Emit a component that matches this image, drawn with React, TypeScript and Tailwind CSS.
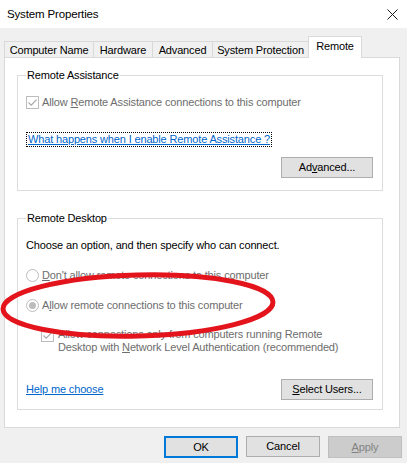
const font = "font-['Segoe_UI','Liberation_Sans',Arial,sans-serif]";

function CheckBox() {
  return (
    <span className="flex h-[13px] w-[13px] shrink-0 items-center justify-center border border-[#bcbcbc] bg-white">
      <svg width="11" height="11" viewBox="0 0 11 11">
        <path d="M1.5 5.5 L4.2 8.2 L9.6 2.6" stroke="#a6a6a6" strokeWidth="1.1" fill="none" />
      </svg>
    </span>
  );
}

function Radio({ checked }: { checked?: boolean }) {
  return (
    <span className="flex h-[13px] w-[13px] shrink-0 items-center justify-center rounded-full border border-[#bcbcbc] bg-white">
      {checked && <span className="h-[7px] w-[7px] rounded-full bg-[#bcbcbc]" />}
    </span>
  );
}

function Button({ children, w = "w-[92px]" }: { children: React.ReactNode; w?: string }) {
  return (
    <div className={`flex h-[21px] ${w} items-center justify-center border border-[#adadad] bg-[#e1e1e1] text-black`}>
      {children}
    </div>
  );
}

function Group({ title, children }: { title: string; children: React.ReactNode }) {
  return (
    <div className="ml-[12px] mr-[16px] border border-[#dcdcdc] pl-[8px] pr-[9px]">
      <div className="-mt-[8px] w-fit bg-white px-[1px] text-black">{title}</div>
      {children}
    </div>
  );
}

const tabs = [
  { label: "Computer Name", w: "w-[89px]" },
  { label: "Hardware", w: "w-[59px]" },
  { label: "Advanced", w: "w-[60px]" },
  { label: "System Protection", w: "w-[96px]" },
];

export default function App() {
  return (
    <div
      className={`relative flex h-[463px] w-[407px] flex-col bg-[#f0f0f0] text-[11px] leading-[15px] tracking-[-0.15px] text-black ${font}`}
    >
      {/* title bar */}
      <div className="flex h-[28px] items-center justify-between bg-white pl-[7px] pr-[9px]">
        <span className="text-[11.5px]">System Properties</span>
        <svg width="11" height="11" viewBox="0 0 11 11">
          <path d="M0.5 0.5 L10.5 10.5 M10.5 0.5 L0.5 10.5" stroke="#1a1a1a" strokeWidth="1" />
        </svg>
      </div>

      {/* tabs */}
      <div className="ml-[4px] mt-[8px] flex h-[21px] items-end">
        {tabs.map((t) => (
          <div
            key={t.label}
            className={`flex h-[16px] ${t.w} items-center justify-center border-l border-t border-[#d9d9d9] pt-[1px]`}
          >
            {t.label}
          </div>
        ))}
        <div className="relative z-10 -mb-px flex h-[22px] w-[54px] items-start justify-center border-x border-t border-[#d9d9d9] bg-white pt-[2px]">
          Remote
        </div>
      </div>

      {/* panel */}
      <div className="ml-[4px] flex w-[396px] flex-col border border-[#d9d9d9] bg-white pb-[17px] pt-[17px]">
        <Group title="Remote Assistance">
          <div className="mt-[12px] flex h-[15px] items-center gap-[3px] text-[#6d6d6d]">
            <CheckBox />
            <span>
              Allow <u>R</u>emote Assistance connections to this computer
            </span>
          </div>
          <div className="mt-[22px] w-fit border border-dotted border-black px-px leading-[13px] text-[#0066cc] underline">
            What happens when I enable Remote Assistance ?
          </div>
          <div className="mb-[12px] mt-[10px] flex justify-end">
            <Button>
              <span>
                Ad<u>v</u>anced...
              </span>
            </Button>
          </div>
        </Group>

        <div className="mt-[27px]">
          <Group title="Remote Desktop">
            <div className="mt-[12px]">Choose an option, and then specify who can connect.</div>
            <div className="mt-[15px] flex h-[15px] items-center gap-[3px] text-[#6d6d6d]">
              <Radio />
              <span>
                <u>D</u>on't allow remote connections to this computer
              </span>
            </div>
            <div className="mt-[15px] flex h-[15px] items-center gap-[3px] text-[#6d6d6d]">
              <Radio checked />
              <span>
                A<u>l</u>low remote connections to this computer
              </span>
            </div>
            <div className="ml-[15px] mt-[15px] flex gap-[4px] leading-[13px] text-[#6d6d6d]">
              <div className="pt-[1px]">
                <CheckBox />
              </div>
              <span>
                Allow connections only from computers running Remote
                <br />
                Desktop with <u>N</u>etwork Level Authentication (recommended)
              </span>
            </div>
            <div className="mb-[9px] mt-[25px] flex items-center justify-between">
              <span className="text-[#0066cc] underline">Help me choose</span>
              <Button>
                <span>
                  <u>S</u>elect Users...
                </span>
              </Button>
            </div>
          </Group>
        </div>
      </div>

      {/* dialog buttons */}
      <div className="mt-[8px] flex justify-end gap-[8px] pr-[5px]">
        <div className="flex h-[22px] w-[74px] items-center justify-center border-2 border-[#0078d7] bg-[#e1e1e1]">OK</div>
        <Button w="w-[74px]">Cancel</Button>
        <div className="flex h-[22px] w-[74px] items-center justify-center border border-[#bfbfbf] bg-[#cccccc] text-[#838383]">
          <span>
            <u>A</u>pply
          </span>
        </div>
      </div>

      {/* red annotation ellipse */}
      <svg className="pointer-events-none absolute left-0 top-0" width="407" height="463">
        <ellipse
          cx="138"
          cy="305.5"
          rx="135"
          ry="30.5"
          transform="rotate(-1.5 138 305.5)"
          fill="none"
          stroke="#e3141c"
          strokeWidth="5"
        />
      </svg>
    </div>
  );
}
